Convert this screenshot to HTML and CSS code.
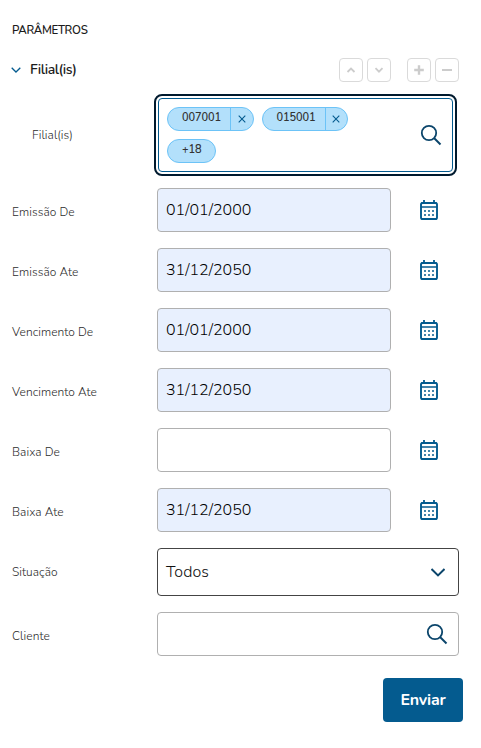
FILE: index.html
```html
<!DOCTYPE html>
<html lang="pt-BR">
<head>
<meta charset="utf-8">
<title>Parâmetros</title>
<link rel="stylesheet" href="styles.css">
</head>
<body>
<svg width="0" height="0" class="sprite">
  <symbol id="calendar" viewBox="0 0 20 22"><rect x="2" y="4" width="16" height="16" rx="1.6" fill="none" stroke="currentColor" stroke-width="1.9"/><path d="M2 4.2h16M2 8h16" stroke="currentColor" stroke-width="1.7"/><path d="M5 1v3M15 1v3" stroke="currentColor" stroke-width="1.8"/><path d="M5 12h2M9 12h2M13 12h2M5 16h2M9 16h2M13 16h2" stroke="currentColor" stroke-opacity=".75" stroke-width="1.8"/></symbol>
  <symbol id="search" viewBox="0 0 22 22"><circle cx="9" cy="9" r="7.2" fill="none" stroke="currentColor" stroke-width="1.8"/><path d="M14 14l6.5 6.5" stroke="currentColor" stroke-width="2"/></symbol>
  <symbol id="close" viewBox="0 0 8 8"><path d="M.7.7l6.6 6.6M7.3.7L.7 7.3" stroke="currentColor" stroke-width="1.1"/></symbol>
</svg>
<main class="form">
  <h1 class="title">PARÂMETROS</h1>
  <div class="group">
    <svg class="toggle" viewBox="0 0 10 6"><path d="M.7.7L5 5 9.3.7" fill="none" stroke="currentColor" stroke-width="1.3"/></svg>
    <h2 class="group-name">Filial(is)</h2>
    <div class="tools">
      <button class="tool"><svg viewBox="0 0 12 12"><path d="M2.5 8L6 4.5 9.5 8" stroke-width="1.8"/></svg></button>
      <button class="tool"><svg viewBox="0 0 12 12"><path d="M2.5 4.2L6 7.7l3.5-3.5" stroke-width="1.8"/></svg></button>
      <button class="tool spaced"><svg viewBox="0 0 12 12"><path d="M6 1.2v9.6M1.2 6h9.6" stroke-width="2.4"/></svg></button>
      <button class="tool"><svg viewBox="0 0 12 12"><path d="M1 6h10" stroke-width="2"/></svg></button>
    </div>
  </div>
  <div class="row branches">
    <label class="label nested">Filial(is)</label>
    <div class="multi">
      <div class="chips">
        <span class="chip"><span class="code">007001</span><span class="remove"><svg><use href="#close"/></svg></span></span>
        <span class="chip"><span class="code">015001</span><span class="remove"><svg><use href="#close"/></svg></span></span>
        <span class="chip more">+18</span>
      </div>
      <svg class="search"><use href="#search"/></svg>
    </div>
  </div>
  <div class="row"><label class="label">Emissão De</label><div class="date filled">01/01/2000</div><svg class="calendar"><use href="#calendar"/></svg></div>
  <div class="row"><label class="label">Emissão Ate</label><div class="date filled">31/12/2050</div><svg class="calendar"><use href="#calendar"/></svg></div>
  <div class="row"><label class="label">Vencimento De</label><div class="date filled">01/01/2000</div><svg class="calendar"><use href="#calendar"/></svg></div>
  <div class="row"><label class="label">Vencimento Ate</label><div class="date filled">31/12/2050</div><svg class="calendar"><use href="#calendar"/></svg></div>
  <div class="row"><label class="label">Baixa De</label><div class="date"></div><svg class="calendar"><use href="#calendar"/></svg></div>
  <div class="row"><label class="label">Baixa Ate</label><div class="date filled">31/12/2050</div><svg class="calendar"><use href="#calendar"/></svg></div>
  <div class="row"><label class="label centered">Situação</label><div class="select"><span>Todos</span><svg class="caret" viewBox="0 0 14 9"><path d="M.5 1L7 7.4 13.5 1" fill="none" stroke="currentColor" stroke-width="2"/></svg></div></div>
  <div class="row"><label class="label">Cliente</label><div class="lookup"><svg class="search"><use href="#search"/></svg></div></div>
  <div class="actions"><button class="submit">Enviar</button></div>
</main>
</body>
</html>
```
FILE: styles.css
```css
* { box-sizing: border-box; }
body { margin: 0; background: #fff; color: #1c1c1c; font-family: Nunito, "Nunito Sans", Lato, sans-serif; }
svg { display: block; flex: none; }
.sprite { display: none; }
.form { width: 481px; height: 748px; padding: 20px 18px 0 12px; }
.title { margin: 0; font-size: 11.5px; line-height: 20px; font-weight: 600; letter-spacing: -.3px; }
.group { display: flex; align-items: center; height: 24px; margin-top: 18px; padding-right: 4px; }
.toggle { width: 10px; height: 6px; margin-left: -1px; color: #045b8f; }
.group-name { margin: 0 0 0 9px; font-size: 14px; font-weight: 600; line-height: 20px; letter-spacing: -.4px; }
.tools { display: flex; gap: 4px; margin-left: auto; margin-right: -4px; }
.tool { display: flex; align-items: center; justify-content: center; width: 24px; height: 24px; padding: 0; border: 1px solid #dadada; border-radius: 4px; background: #fff; }
.tool.spaced { margin-left: 12px; }
.tool svg { width: 12px; height: 12px; fill: none; stroke: #ccc; }
.group { padding-right: 8px; }
.row { display: flex; align-items: center; margin-bottom: 16px; }
.row.branches { margin-top: 16px; }
.label { width: 145px; flex: none; padding-top: 4px; font-size: 12px; font-weight: 350; line-height: 16px; color: #2c2c2c; letter-spacing: .05px; }
.label.centered { padding-top: 0; }
.label.nested { width: 146px; padding: 0 0 0 20px; }
.multi { display: flex; align-items: center; width: 295px; height: 74px; padding: 0 10px 0 8px; border: 1px solid #045b8f; border-radius: 4px; outline: 2px solid #001a2e; outline-offset: 2px; }
.chips { display: flex; flex-wrap: wrap; gap: 8px; width: 190px; }
.chip { display: flex; width: 86.5px; height: 24px; border: 1px solid #6cc3f7; border-radius: 12px; background: #b3e0fb; color: #333; font-size: 11px; font-weight: 600; line-height: 20px; letter-spacing: -.1px; }
.code { width: 63px; padding-left: 14px; border-right: 1px solid #6cc3f7; }
.remove { display: flex; flex: 1; align-items: center; justify-content: center; color: #045b8f; }
.remove svg { width: 8px; height: 8px; }
.chip.more { width: 49px; padding-left: 14px; }
.search { width: 22px; height: 22px; margin-left: auto; color: #0b456b; }
.date, .select, .lookup { border: 1px solid #b0b0b0; border-radius: 4px; background: #fff; }
.date { width: 234px; height: 44px; padding-left: 8px; color: #000; font-size: 16px; font-weight: 350; line-height: 42px; }
.date.filled { background: #e8f0fe; }
.calendar { width: 20px; height: 22px; margin-left: 28px; color: #045b8f; }
.select { display: flex; align-items: center; justify-content: space-between; width: 302px; height: 48px; padding: 0 13px 0 8px; border-color: #444; font-size: 16px; font-weight: 350; color: #111; letter-spacing: .05px; }
.caret { width: 14px; height: 9px; color: #0b456b; }
.lookup { display: flex; align-items: center; width: 302px; height: 44px; padding-right: 10px; }
.actions { display: flex; justify-content: flex-end; margin-top: 22px; }
.submit { width: 80px; height: 44px; padding: 0; border: 0; border-radius: 4px; background: #045b8f; color: #fff; font: 700 16px/44px Nunito, "Nunito Sans", Lato, sans-serif; letter-spacing: -.2px; }
```
